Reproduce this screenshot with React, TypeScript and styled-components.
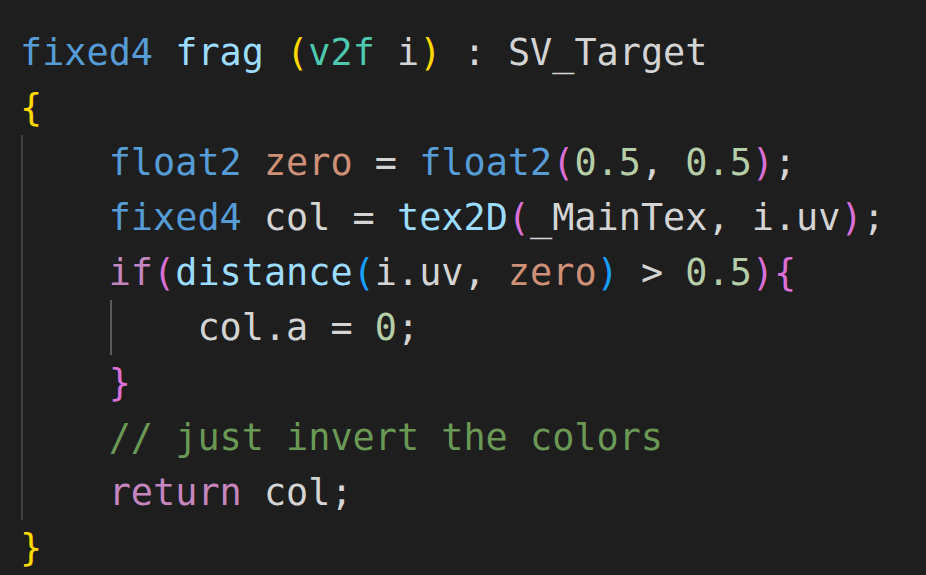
import React from "react";
import styled, { createGlobalStyle } from "styled-components";

const Global = createGlobalStyle`
  html, body { margin: 0; padding: 0; background: #1e1e1e; }
  #root { width: 926px; height: 575px; overflow: hidden; }
`;

const Editor = styled.div`
  box-sizing: border-box;
  width: 926px;
  height: 575px;
  background: #1e1e1e;
  padding: 25px 0 0 20px;
  font-family: "DejaVu Sans Mono", "Liberation Mono", monospace;
  font-size: 36.85px;
  color: #d4d4d4;
`;

const Line = styled.div`
  display: flex;
  align-items: stretch;
  height: 55px;
  line-height: 55px;
  white-space: pre;
`;

const Indent = styled.span<{ $guide?: string }>`
  box-sizing: border-box;
  flex: none;
  width: 4ch;
  border-left: 2px solid ${(p) => p.$guide || "transparent"};
  margin-left: 1px;
  margin-right: -1px;
`;

const Code = styled.span`
  display: block;
`;

const C = {
  type: "#569cd6",
  fn: "#9cdcfe",
  cls: "#4ec9b0",
  text: "#d4d4d4",
  y: "#ffd700",
  p: "#da70d6",
  b: "#179fff",
  local: "#ce9178",
  num: "#b5cea8",
  com: "#6a9955",
  kw: "#c586c0",
};

const T = styled.span<{ $c: string }>`
  color: ${(p) => p.$c};
`;

const G1 = "#404040";
const G2 = "#5a5a5a";

type Tok = [string, string];

const lines: { indent: string[]; toks: Tok[] }[] = [
  {
    indent: [],
    toks: [
      ["fixed4", C.type],
      [" ", C.text],
      ["frag", C.fn],
      [" ", C.text],
      ["(", C.y],
      ["v2f", C.cls],
      [" i", C.text],
      [")", C.y],
      [" : SV_Target", C.text],
    ],
  },
  { indent: [], toks: [["{", C.y]] },
  {
    indent: [G1],
    toks: [
      ["float2", C.type],
      [" ", C.text],
      ["zero", C.local],
      [" = ", C.text],
      ["float2", C.type],
      ["(", C.p],
      ["0.5", C.num],
      [", ", C.text],
      ["0.5", C.num],
      [")", C.p],
      [";", C.text],
    ],
  },
  {
    indent: [G1],
    toks: [
      ["fixed4", C.type],
      [" col = ", C.text],
      ["tex2D", C.fn],
      ["(", C.p],
      ["_MainTex, i.uv", C.text],
      [")", C.p],
      [";", C.text],
    ],
  },
  {
    indent: [G1],
    toks: [
      ["if", C.kw],
      ["(", C.p],
      ["distance", C.fn],
      ["(", C.b],
      ["i.uv, ", C.text],
      ["zero", C.local],
      [")", C.b],
      [" > ", C.text],
      ["0.5", C.num],
      [")", C.p],
      ["{", C.p],
    ],
  },
  {
    indent: [G1, G2],
    toks: [
      ["col.a = ", C.text],
      ["0", C.num],
      [";", C.text],
    ],
  },
  { indent: [G1], toks: [["}", C.p]] },
  { indent: [G1], toks: [["// just invert the colors", C.com]] },
  {
    indent: [G1],
    toks: [
      ["return", C.kw],
      [" col;", C.text],
    ],
  },
  { indent: [], toks: [["}", C.y]] },
];

export default function App() {
  return (
    <>
      <Global />
      <Editor>
        {lines.map((l, i) => (
          <Line key={i}>
            {l.indent.map((g, j) => (
              <Indent key={j} $guide={g} />
            ))}
            <Code>
              {l.toks.map(([t, c], k) => (
                <T key={k} $c={c}>
                  {t}
                </T>
              ))}
            </Code>
          </Line>
        ))}
      </Editor>
    </>
  );
}
